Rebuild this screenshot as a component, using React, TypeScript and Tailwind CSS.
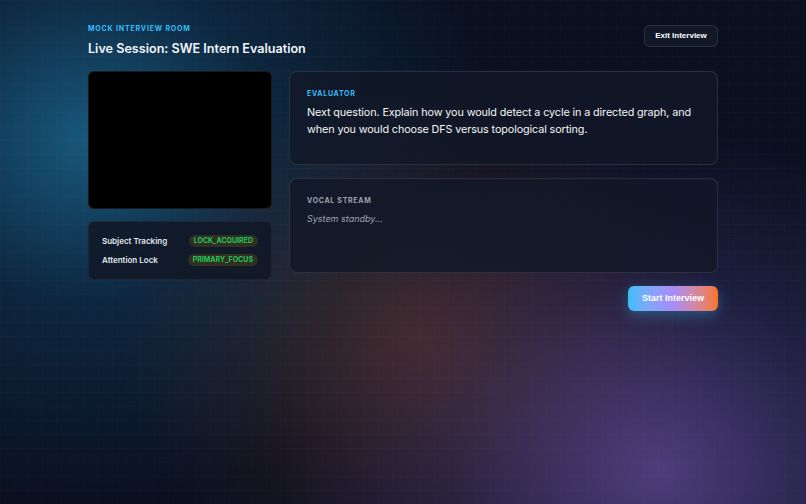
import { useState } from 'react';

const statusRows = [
  { label: 'Subject Tracking', value: 'LOCK_ACQUIRED' },
  { label: 'Attention Lock', value: 'PRIMARY_FOCUS' },
];

export default function App() {
  const [running, setRunning] = useState(false);

  return (
    <div
      className="relative min-h-[504px] w-full overflow-hidden bg-[#0a1020] text-white"
      style={{ fontFamily: 'Inter, "Noto Sans", sans-serif' }}
    >
      {/* glow layers */}
      <div className="pointer-events-none absolute inset-0 bg-[radial-gradient(ellipse_400px_360px_at_90px_140px,rgba(28,112,155,0.75),rgba(18,72,110,0.4)_45%,transparent_100%)]" />
      <div className="pointer-events-none absolute inset-0 bg-[radial-gradient(ellipse_300px_260px_at_420px_340px,rgba(150,75,35,0.38),rgba(120,60,40,0.15)_60%,transparent_100%)]" />
      <div className="pointer-events-none absolute inset-0 bg-[radial-gradient(ellipse_380px_340px_at_660px_470px,rgba(120,90,185,0.6),rgba(90,70,150,0.25)_55%,transparent_100%)]" />
      <div className="pointer-events-none absolute inset-0 bg-[linear-gradient(rgba(255,255,255,0.012)_1px,transparent_1px),linear-gradient(90deg,rgba(255,255,255,0.012)_1px,transparent_1px)] bg-[size:14px_14px]" />

      <div className="relative mx-auto w-[630px] pt-[24px]">
        <div className="flex items-start justify-between">
          <div>
            <p className="text-[7px] font-bold tracking-[0.12em] text-[#38bdf8]">MOCK INTERVIEW ROOM</p>
            <h1 className="mt-[5px] text-[12.6px] font-semibold text-[#f1f5f9]">Live Session: SWE Intern Evaluation</h1>
          </div>
          <button
            className="mt-[1px] h-[22px] w-[74px] rounded-md border border-white/10 bg-[#111827] text-[8px] font-bold text-white"
            style={{ fontFamily: '"Liberation Sans", Arial, sans-serif' }}
          >
            Exit Interview
          </button>
        </div>

        <div className="mt-[13px] flex gap-[17px]">
          <div className="flex w-[184px] flex-col gap-[12px]">
            <div className="h-[138px] rounded-md border border-white/10 bg-black" />
            <div className="flex flex-col gap-[7px] rounded-md border border-white/5 bg-[#111827]/90 px-[13px] py-[13px]">
              {statusRows.map(row => (
                <div key={row.label} className="flex h-[12px] items-center justify-between">
                  <span className="text-[8px] font-semibold text-[#e5e7eb]">{row.label}</span>
                  <span className="rounded-full bg-[#302f20] px-[5px] text-[7px] leading-[12px] font-bold text-[#22c55e]">
                    {row.value}
                  </span>
                </div>
              ))}
            </div>
          </div>

          <div className="flex flex-1 flex-col gap-[13px]">
            <div className="h-[94px] rounded-lg border border-white/10 bg-[#111827]/80 px-[17px] pt-[17px]">
              <p className="text-[7px] font-bold tracking-[0.1em] text-[#38bdf8]">EVALUATOR</p>
              <p className="mt-[4px] text-[10.8px] leading-[17px] tracking-[-0.01em] text-[#f3f4f6]">
                Next question. Explain how you would detect a cycle in a directed graph, and when you would choose DFS versus topological sorting.
              </p>
            </div>
            <div className="h-[95px] rounded-lg border border-white/10 bg-[#111827]/80 px-[17px] pt-[17px]">
              <p className="text-[7px] font-bold tracking-[0.1em] text-[#9ca3af]">VOCAL STREAM</p>
              <p className="mt-[5px] text-[9px] italic text-[#9ca3af]">
                {running ? 'Listening...' : 'System standby...'}
              </p>
            </div>
            <div className="flex justify-end">
              <button
                onClick={() => setRunning(!running)}
                className="h-[25px] w-[90px] rounded-md bg-gradient-to-r from-[#38bdf8] via-[#a78bfa] to-[#f97316] text-[9px] font-bold text-white shadow-[0_4px_14px_rgba(56,189,248,0.35)]"
                style={{ fontFamily: '"Liberation Sans", Arial, sans-serif' }}
              >
                Start Interview
              </button>
            </div>
          </div>
        </div>
      </div>
    </div>
  );
}
